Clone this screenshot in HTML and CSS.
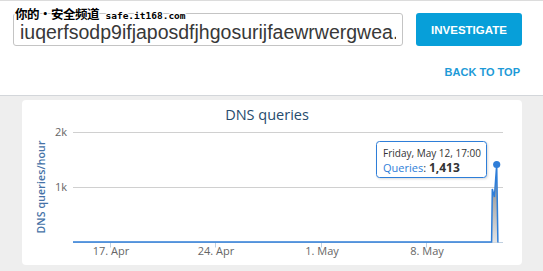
FILE: index.html
```html
<!DOCTYPE html>
<html lang="en">
<head>
  <meta charset="UTF-8">
  <meta name="viewport" content="width=device-width, initial-scale=1.0">
  <title>Investigate domain</title>
  <link rel="stylesheet" href="styles.css">
</head>
<body>
  <!-- site watermark from the screenshot source -->
  <span class="watermark"><span class="wm-cn">你的•安全频道</span> <span class="wm-url">safe.it168.com</span></span>

  <header class="topbar">
    <div class="search-row">
      <input class="domain-input" type="text" value="iuqerfsodp9ifjaposdfjhgosurijfaewrwergwea.">
      <button class="btn-investigate">INVESTIGATE</button>
    </div>
    <div class="back-row">
      <a class="back-top" href="#">BACK TO TOP</a>
    </div>
  </header>

  <section class="chart-card">
    <svg class="chart" width="500" height="165" viewBox="0 0 500 165">
      <defs>
        <linearGradient id="areaFill" x1="0" y1="0" x2="0" y2="1">
          <stop offset="0" stop-color="#7a7a7a"/>
          <stop offset="1" stop-color="#e4e4e4"/>
        </linearGradient>
        <filter id="tipShadow" x="-10%" y="-10%" width="130%" height="140%">
          <feDropShadow dx="1" dy="1" stdDeviation="1" flood-color="#000" flood-opacity="0.15"/>
        </filter>
      </defs>

      <text class="chart-title" x="245" y="20" text-anchor="middle">DNS queries</text>

      <!-- grid -->
      <line class="grid" x1="51" y1="32.5" x2="481" y2="32.5"/>
      <line class="grid" x1="51" y1="87.5" x2="481" y2="87.5"/>
      <line class="axis" x1="51" y1="142.5" x2="481" y2="142.5"/>

      <text class="ylabel" x="45" y="36" text-anchor="end">2k</text>
      <text class="ylabel" x="45" y="91" text-anchor="end">1k</text>

      <text class="ytitle" x="0" y="0" text-anchor="middle" textLength="93" transform="translate(23 87) rotate(-90)">DNS queries/hour</text>

      <!-- x ticks -->
      <line class="tick" x1="88.5" y1="142.5" x2="88.5" y2="147.5"/>
      <line class="tick" x1="193.5" y1="142.5" x2="193.5" y2="147.5"/>
      <line class="tick" x1="299.5" y1="142.5" x2="299.5" y2="147.5"/>
      <line class="tick" x1="404.5" y1="142.5" x2="404.5" y2="147.5"/>
      <text class="xlabel" x="89" y="155" text-anchor="middle">17. Apr</text>
      <text class="xlabel" x="194" y="155" text-anchor="middle">24. Apr</text>
      <text class="xlabel" x="300" y="155" text-anchor="middle">1. May</text>
      <text class="xlabel" x="405" y="155" text-anchor="middle">8. May</text>

      <!-- series -->
      <path class="area" d="M469.6,142.5 L470.3,89 L472.4,97 L474.7,64.5 L475.9,142.5 Z"/>
      <path class="series" d="M51,142 L469.6,142 L470.3,89 L472.4,97 L474.7,64.5 L475.9,142.5"/>
      <circle class="marker" cx="474.7" cy="64.5" r="3.6"/>

      <!-- tooltip -->
      <g class="tooltip">
        <rect x="354.5" y="41.5" width="110" height="36" rx="3" ry="3" filter="url(#tipShadow)"/>
        <text class="tip-date" x="361" y="57">Friday, May 12, 17:00</text>
        <text class="tip-line" x="361" y="72"><tspan class="tip-name">Queries</tspan>: <tspan class="tip-value">1,413</tspan></text>
      </g>
    </svg>
  </section>
</body>
</html>
```

FILE: styles.css
```css
body {
  margin: 0;
  background-color: #eeeeee;
  font-family: "Liberation Sans", Arial, sans-serif;
}
.watermark {
  position: absolute;
  left: 15px;
  top: 4px;
  font-weight: bold;
  color: #000;
  white-space: nowrap;
  text-shadow: -1px 0 #fff, 1px 0 #fff, 0 -1px #fff, 0 1px #fff,
    -1px -1px #fff, 1px 1px #fff, -1px 1px #fff, 1px -1px #fff;
  z-index: 2;
}
.wm-cn {
  font-family: "Noto Sans CJK SC", sans-serif;
  font-size: 12.5px;
  letter-spacing: -0.5px;
}
.wm-url {
  font-family: "DejaVu Sans Mono", monospace;
  font-size: 9.5px;
  margin-left: 2px;
}
.topbar {
  background-color: #ffffff;
  border-top: 1px solid #dcdcdc;
  border-bottom: 1px solid #d3d6da;
  height: 94px;
  box-sizing: content-box;
}
.search-row {
  display: flex;
  gap: 13px;
  padding: 12px 21px 0 13px;
}
.domain-input {
  width: 390px;
  height: 33px;
  box-sizing: border-box;
  border: 1px solid #c4c4c4;
  border-radius: 3px;
  padding: 6px 6px 0;
  font-family: "Liberation Sans", Arial, sans-serif;
  font-size: 19.5px;
  color: #383838;
  background: #fff;
  outline: none;
}
.btn-investigate {
  width: 106px;
  height: 33px;
  border: none;
  border-radius: 3px;
  background-color: #079fd9;
  color: #ffffff;
  font-family: "Liberation Sans", Arial, sans-serif;
  font-weight: bold;
  font-size: 11.5px;
  padding: 0;
  cursor: pointer;
}
.back-row {
  display: flex;
  justify-content: flex-end;
  padding: 20px 23px 0 0;
}
.back-top {
  color: #1d9ad7;
  font-size: 11px;
  font-weight: bold;
  text-decoration: none;
}
.chart-card {
  margin: 4px 21px 0 22px;
  height: 165px;
  background-color: #ffffff;
  border-radius: 4px;
}
.chart {
  display: block;
  font-family: "Open Sans", "DejaVu Sans", sans-serif;
}
.chart-title {
  font-size: 14.5px;
  fill: #274b6d;
}
.grid {
  stroke: #d0d0d0;
  stroke-width: 1;
}
.axis {
  stroke: #c0d0e0;
  stroke-width: 1;
}
.tick {
  stroke: #c0d0e0;
  stroke-width: 1;
}
.ylabel,
.xlabel {
  font-size: 11px;
  fill: #666666;
}
.ytitle {
  font-size: 10.5px;
  font-weight: 600;
  fill: #4572a7;
}
.area {
  fill: url(#areaFill);
}
.series {
  fill: none;
  stroke: #2f7ed8;
  stroke-width: 1.5;
}
.marker {
  fill: #2f7ed8;
}
.tooltip rect {
  fill: #ffffff;
  stroke: #2f7ed8;
  stroke-width: 1;
}
.tip-date {
  font-size: 10px;
  fill: #333333;
}
.tip-line {
  font-size: 11px;
  fill: #333333;
}
.tip-name {
  fill: #2f7ed8;
}
.tip-value {
  font-weight: bold;
  font-size: 12px;
}
```
